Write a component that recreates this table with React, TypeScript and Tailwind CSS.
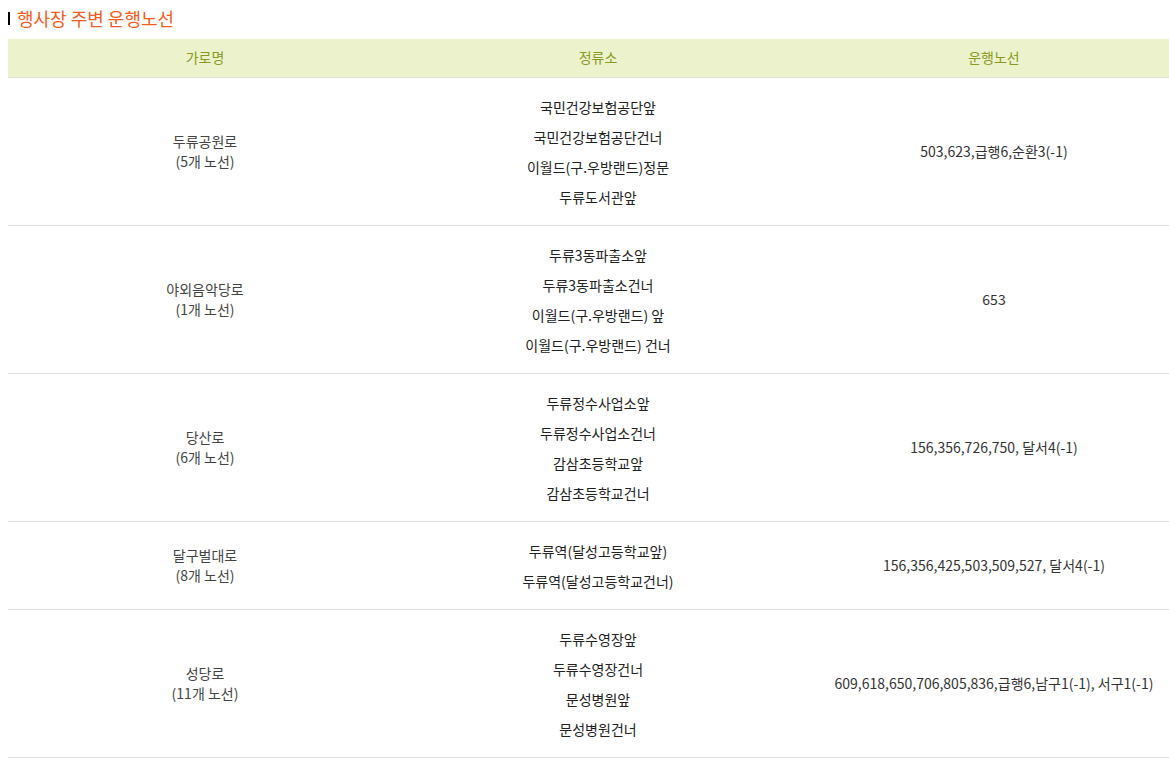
const rows = [
  {
    road: '두류공원로',
    count: '(5개 노선)',
    stops: ['국민건강보험공단앞', '국민건강보험공단건너', '이월드(구.우방랜드)정문', '두류도서관앞'],
    lines: '503,623,급행6,순환3(-1)',
  },
  {
    road: '야외음악당로',
    count: '(1개 노선)',
    stops: ['두류3동파출소앞', '두류3동파출소건너', '이월드(구.우방랜드) 앞', '이월드(구.우방랜드) 건너'],
    lines: '653',
  },
  {
    road: '당산로',
    count: '(6개 노선)',
    stops: ['두류정수사업소앞', '두류정수사업소건너', '감삼초등학교앞', '감삼초등학교건너'],
    lines: '156,356,726,750, 달서4(-1)',
  },
  {
    road: '달구벌대로',
    count: '(8개 노선)',
    stops: ['두류역(달성고등학교앞)', '두류역(달성고등학교건너)'],
    lines: '156,356,425,503,509,527, 달서4(-1)',
  },
  {
    road: '성당로',
    count: '(11개 노선)',
    stops: ['두류수영장앞', '두류수영장건너', '문성병원앞', '문성병원건너'],
    lines: '609,618,650,706,805,836,급행6,남구1(-1), 서구1(-1)',
  },
];

export default function App() {
  return (
    <div
      className="w-[1169px] min-h-[772px] overflow-hidden bg-white text-[14px] text-[#333]"
      style={{ fontFamily: '"Noto Sans CJK KR", "Noto Sans", sans-serif' }}
    >
      {/* Section title */}
      <h2 className="flex h-[39px] items-center pl-2 pb-[3px]">
        <span className="mr-[7px] h-[13px] w-[2px] bg-black" />
        <span className="text-[18px] font-normal text-[#f25c22]">행사장 주변 운행노선</span>
      </h2>

      <table className="ml-2 w-[1182px] table-fixed border-collapse">
        <colgroup>
          <col className="w-[394px]" />
          <col className="w-[396px]" />
          <col className="w-[392px]" />
        </colgroup>
        <thead>
          <tr className="h-[38px] border-b border-[#e0e0e0] bg-[#ecf2cb] text-[#8a991f]">
            <th className="font-normal">가로명</th>
            <th className="pr-1 font-normal">정류소</th>
            <th className="font-normal">운행노선</th>
          </tr>
        </thead>
        <tbody>
          {rows.map((r) => (
            <tr key={r.road} className="border-b border-[#e0e0e0]">
              <td className="text-center leading-[20px] text-[#444]">
                <div>{r.road}</div>
                <div>{r.count}</div>
              </td>
              <td className="pt-[14px] pr-1 pb-[13px] text-center text-[#222]">
                {r.stops.map((s) => (
                  <div key={s} className="leading-[30px]">
                    {s}
                  </div>
                ))}
              </td>
              <td className="text-center">{r.lines}</td>
            </tr>
          ))}
        </tbody>
      </table>
    </div>
  );
}
